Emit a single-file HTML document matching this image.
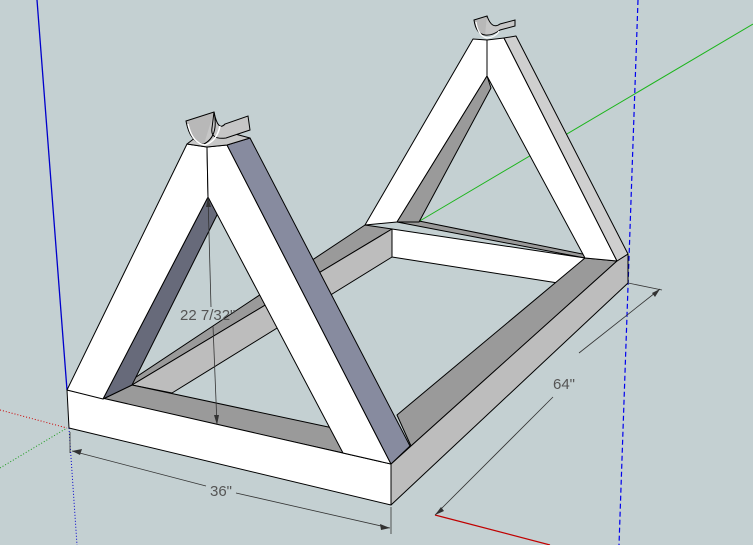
<!DOCTYPE html>
<html><head><style>html,body{margin:0;padding:0;background:#c4d0d2;}svg{display:block}</style></head>
<body>
<svg width="753" height="545" viewBox="0 0 753 545" xmlns="http://www.w3.org/2000/svg" font-family="Liberation Sans, sans-serif">
<rect width="753" height="545" fill="#c4d0d2"/>
<!-- axes -->
<line x1="37" y1="0" x2="67" y2="390" stroke="#0000cc" stroke-width="1.3"/>
<line x1="638" y1="0" x2="619" y2="545" stroke="#0000ee" stroke-width="1.2" stroke-dasharray="5,3"/>
<line x1="753" y1="24" x2="418" y2="222" stroke="#1cb51c" stroke-width="1"/>
<line x1="0" y1="410" x2="67" y2="428" stroke="#cc0000" stroke-width="1" stroke-dasharray="1,2"/>
<line x1="0" y1="468" x2="67" y2="428" stroke="#1a9a1a" stroke-width="1" stroke-dasharray="1,2"/>
<line x1="69" y1="428" x2="77" y2="545" stroke="#0000cc" stroke-width="1" stroke-dasharray="1,2"/>
<line x1="435" y1="515" x2="550" y2="545" stroke="#c00000" stroke-width="1.2"/>
<g stroke="#000" stroke-width="1" stroke-linejoin="round">
<!-- back left rail -->
<polygon points="365,225 392,229 132,385 103,399" fill="#9a9a9a"/>
<polygon points="392,229 392,257 172,393 132,385" fill="#bdbdbd"/>
<!-- back rail -->
<polygon points="397,222 419,221 617,261 585,258" fill="#9a9a9a"/>
<polygon points="392,229 585,258 558,283 392,257" fill="#ffffff"/>
<!-- right rail -->
<polygon points="585,258 617,261 411,446 397,415" fill="#9a9a9a"/>
<polygon points="617,261 628,254 628,283 391,505 391,464 411,446" fill="#bdbdbd"/>
<!-- front rail dark top -->
<polygon points="103,399 132,385 333,428 343,453" fill="#9a9a9a"/>
<!-- back triangle -->
<polygon points="365,225 473,39 487,40 487,76 397,222" fill="#ffffff"/>
<polygon points="487,76 491,88 419,222 397,222" fill="#9a9a9a"/>
<polygon points="487,40 504,38 617,261 585,258 487,76" fill="#ffffff"/>
<polygon points="504,38 516,36 628,254 617,261" fill="#cfcfcf"/>
<!-- front box -->
<polygon points="67,390 391,464 391,505 69,428" fill="#ffffff"/>
<!-- front triangle -->
<polygon points="208,197 218,213 132,385 103,399" fill="#676a7a"/>
<polygon points="67,390 187,144 207,147 208,197 103,399" fill="#ffffff"/>
<polygon points="207,147 227,145 391,464 343,453 208,197" fill="#ffffff"/>
<polygon points="227,145 250,138 410,446 391,464" fill="#878b9f"/>
<polygon points="187,144 207,147 227,145 250,138 235,134 200,134" fill="#c8c8c8"/>
</g>
<!-- saddles -->
<g stroke="#000" stroke-width="1">
<path d="M186,121 L214,112 Q219,136 204,144 Q190,143 186,121 Z" fill="#b8b8b8"/>
<path d="M204,144 Q219,136 214,112 L212,128 Q210,140 226,138 L250,130 L248,116 L225,124 Q218,132 214,112" fill="#c6c6c6"/>
<path d="M188,124 Q192,143 205,145 Q217,141 220,126" fill="none" stroke="#fff" stroke-width="1.5"/>
<path d="M474,20 L487,16 Q490,30 485,35 Q476,34 474,20 Z" fill="#b8b8b8"/>
<path d="M485,35 Q492,36 500,30 L515,26 L515,20 L500,24 Q492,30 487,16" fill="#c6c6c6"/>
<path d="M476,22 Q478,36 487,38 Q496,37 499,31" fill="none" stroke="#fff" stroke-width="1.2"/>
</g>
<!-- dimensions -->
<g stroke="#333" stroke-width="0.8" fill="none">
<line x1="208" y1="197" x2="211" y2="307"/>
<line x1="213" y1="326" x2="217" y2="425"/>
<line x1="70" y1="432" x2="70" y2="453"/>
<line x1="391" y1="507" x2="391" y2="534"/>
<line x1="72" y1="451" x2="206" y2="486"/>
<line x1="236" y1="493" x2="390" y2="528"/>
<line x1="628" y1="283" x2="662" y2="290"/>
<line x1="435" y1="515" x2="553" y2="397"/>
<line x1="579" y1="353" x2="660" y2="289"/>
</g>
<g fill="#333">
<polygon points="72,451 82,449 80,455"/><polygon points="390,528 380,524 381,530"/>
<polygon points="208,197 206,207 211,207"/><polygon points="217,425 214,415 219,415"/>
<polygon points="435,515 441,507 444,511"/><polygon points="660,289 652,293 655,297"/>
</g>
<g fill="#555" font-size="15">
<text x="210" y="496">36"</text>
<text x="553" y="389">64"</text>
<text x="180" y="320">22 7/32"</text>
</g>
</svg>
</body></html>
